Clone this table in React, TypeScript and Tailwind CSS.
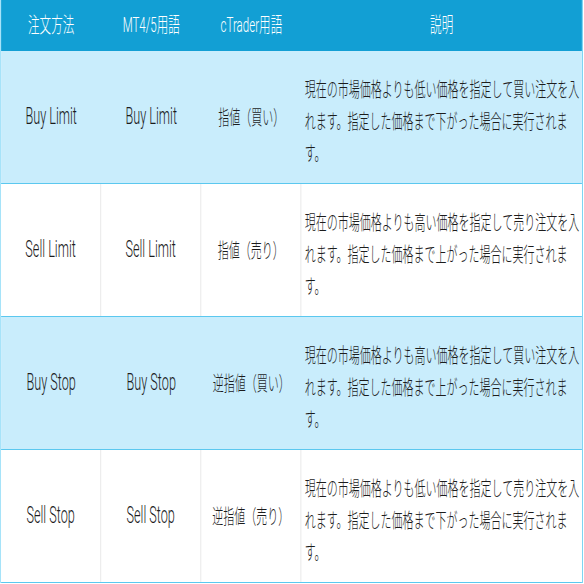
const rows = [
  {
    method: "Buy Limit",
    mt: "Buy Limit",
    ct: "指値（買い）",
    desc: "現在の市場価格よりも低い価格を指定して買い注文を入れます。指定した価格まで下がった場合に実行されます。",
  },
  {
    method: "Sell Limit",
    mt: "Sell Limit",
    ct: "指値（売り）",
    desc: "現在の市場価格よりも高い価格を指定して売り注文を入れます。指定した価格まで上がった場合に実行されます。",
  },
  {
    method: "Buy Stop",
    mt: "Buy Stop",
    ct: "逆指値（買い）",
    desc: "現在の市場価格よりも高い価格を指定して買い注文を入れます。指定した価格まで上がった場合に実行されます。",
  },
  {
    method: "Sell Stop",
    mt: "Sell Stop",
    ct: "逆指値（売り）",
    desc: "現在の市場価格よりも低い価格を指定して売り注文を入れます。指定した価格まで下がった場合に実行されます。",
  },
];

export default function App() {
  return (
    <div className="w-[584px] h-[584px] overflow-hidden bg-white">
      {/* the reference is a wide table squeezed horizontally */}
      <div
        className="w-[1060px] origin-top-left scale-x-[0.55] border-l-2 border-r-2 border-l-[#a6e3f9] border-r-[#7fd4f3] text-[#1c1c1c] font-light"
        style={{ fontFamily: 'Roboto, "Noto Sans CJK JP", sans-serif' }}
      >
        <div className="grid grid-cols-[182px_182px_182px_1fr] h-[51px] bg-[#129fd4] text-white text-[21px]">
          <div className="flex items-center justify-center">注文方法</div>
          <div className="flex items-center justify-center">MT4/5用語</div>
          <div className="flex items-center justify-center">cTrader用語</div>
          <div className="flex items-center justify-center">説明</div>
        </div>
        {rows.map((r, i) => {
          const blue = i % 2 === 0;
          const cell = blue
            ? "flex items-center justify-center"
            : "flex items-center justify-center border-r-2 border-[#ececec]";
          return (
            <div
              key={r.method}
              className={
                blue
                  ? "grid grid-cols-[182px_182px_182px_1fr] h-[133px] border-b border-[#5bc8ef] bg-[#c9edfc]"
                  : "grid grid-cols-[182px_182px_182px_1fr] h-[133px] border-b border-[#5bc8ef] bg-white"
              }
            >
              <div className={cell + " text-[23px]"}>{r.method}</div>
              <div className={cell + " text-[23px]"}>{r.mt}</div>
              <div
                className={cell + " text-[20px]"}
                style={{ fontFamily: '"Noto Sans CJK JP", sans-serif' }}
              >
                {r.ct}
              </div>
              <div className="flex items-center pl-[6px] pr-[2px] pt-[8px]">
                <p
                  className="text-[20px] leading-[32px]"
                  style={{ fontFamily: '"Noto Sans CJK JP", sans-serif' }}
                >
                  {r.desc}
                </p>
              </div>
            </div>
          );
        })}
      </div>
    </div>
  );
}
